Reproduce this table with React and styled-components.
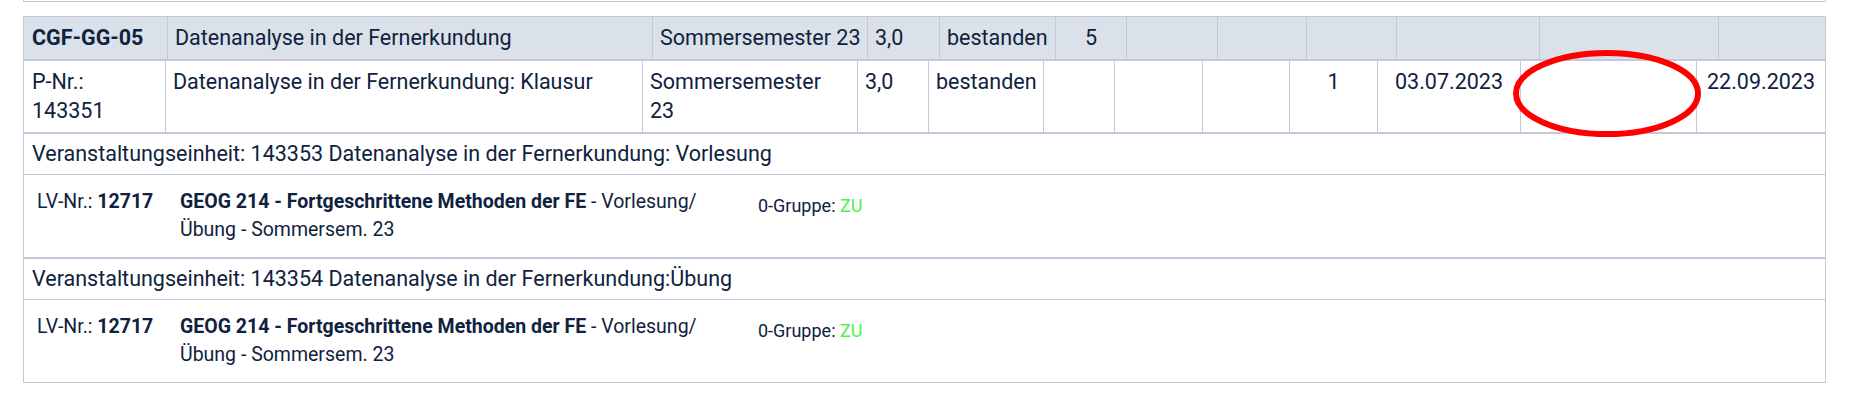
import React from "react";
import styled, { createGlobalStyle } from "styled-components";

// Page-wide reset
const GlobalStyle = createGlobalStyle`
  body {
    margin: 0;
    background: #ffffff;
    font-family: Roboto, "Liberation Sans", sans-serif;
    color: #0f2240;
  }
`;

const LINE = "#c4c8da";

// Layout
const Page = styled.div`
  position: relative;
  padding: 0 23px;
`;

const PrevBox = styled.div`
  height: 1px;
  border: 1px solid ${LINE};
  border-top: none;
`;

const Table = styled.div`
  margin-top: 14px;
  border: 1px solid ${LINE};
  border-bottom: none;
`;

// Grid rows for module (header) and exam (body) lines
const GridRow = styled.div`
  display: grid;
  grid-template-columns: ${(p) => p.$cols};
  background: ${(p) => (p.$head ? "#dbe1e8" : "#ffffff")};
  border-bottom: 1px solid ${LINE};
  border-top: ${(p) => (p.$head ? "none" : `1px solid ${LINE}`)};
  font-size: 21.5px;
  line-height: 29px;
`;

const Cell = styled.div`
  box-sizing: border-box;
  padding: 6px 7px 7px;
  border-left: ${(p) => (p.$first ? "none" : `1px solid ${LINE}`)};
  padding-left: ${(p) => (p.$first ? "8px" : "7px")};
  text-align: ${(p) => (p.$center ? "center" : "left")};
  font-weight: ${(p) => (p.$bold ? 700 : 400)};
  white-space: ${(p) => (p.$head ? "nowrap" : "normal")};
  overflow: hidden;
`;

const UnitRow = styled.div`
  font-size: 21.5px;
  line-height: 29px;
  padding: 5px 8px 6px;
  border-top: 1px solid ${LINE};
  border-bottom: 1px solid ${LINE};
`;

const CourseRow = styled.div`
  display: flex;
  align-items: flex-start;
  padding: 13px;
  font-size: 19.5px;
  line-height: 28px;
  border-bottom: 1px solid ${LINE};
`;

const CourseNumber = styled.div`
  width: 143px;
  flex-shrink: 0;
`;

const CourseTitle = styled.div`
  width: 540px;
  flex-shrink: 0;
  margin-right: 38px;
`;

const Strong = styled.b`
  font-weight: 700;
`;

const Group = styled.div`
  font-size: 18px;
  margin-top: 4px;
`;

const Status = styled.span`
  color: #4ef04e;
`;

// Red marker drawn over the screenshot
const Marker = styled.svg`
  position: absolute;
  left: 0;
  top: 0;
  pointer-events: none;
`;

const headCols = "143px 485px 215px 72px 116px 71px 91px 89px 90px 143px 179px 107px";
const bodyCols = "141px 477px 215px 71px 115px 71px 88px 87px 88px 143px 176px 129px";

const headCells = [
  { text: "CGF-GG-05", bold: true },
  { text: "Datenanalyse in der Fernerkundung" },
  { text: "Sommersemester 23" },
  { text: "3,0" },
  { text: "bestanden" },
  { text: "5", center: true },
  {}, {}, {}, {}, {}, {},
];

const bodyCells = [
  { text: "P-Nr.: 143351" },
  { text: "Datenanalyse in der Fernerkundung: Klausur" },
  { text: "Sommersemester 23" },
  { text: "3,0" },
  { text: "bestanden" },
  {}, {}, {},
  { text: "1", center: true },
  { text: "03.07.2023", center: true },
  {},
  { text: "22.09.2023", center: true },
];

const units = [
  "Veranstaltungseinheit: 143353 Datenanalyse in der Fernerkundung: Vorlesung",
  "Veranstaltungseinheit: 143354 Datenanalyse in der Fernerkundung:Übung",
];

const Course = () => (
  <CourseRow>
    <CourseNumber>
      LV-Nr.: <Strong>12717</Strong>
    </CourseNumber>
    <CourseTitle>
      <Strong>GEOG 214 - Fortgeschrittene Methoden der FE</Strong> - Vorlesung/
      Übung - Sommersem. 23
    </CourseTitle>
    <Group>
      0-Gruppe: <Status>ZU</Status>
    </Group>
  </CourseRow>
);

const App = () => {
  return (
    <Page>
      <GlobalStyle />
      <PrevBox />
      <Table>
        {/* Module line */}
        <GridRow $cols={headCols} $head>
          {headCells.map((c, i) => (
            <Cell key={i} $head $first={i === 0} $bold={c.bold} $center={c.center}>
              {c.text}
            </Cell>
          ))}
        </GridRow>
        {/* Exam line */}
        <GridRow $cols={bodyCols}>
          {bodyCells.map((c, i) => (
            <Cell key={i} $first={i === 0} $center={c.center}>
              {c.text}
            </Cell>
          ))}
        </GridRow>
        {units.map((u, i) => (
          <React.Fragment key={i}>
            <UnitRow>{u}</UnitRow>
            <Course />
          </React.Fragment>
        ))}
      </Table>
      <Marker width="1849" height="160" viewBox="0 0 1849 160">
        <ellipse cx="1607" cy="93.5" rx="91" ry="40.5" fill="none" stroke="#ff0000" strokeWidth="6" />
      </Marker>
    </Page>
  );
};

export default App;
